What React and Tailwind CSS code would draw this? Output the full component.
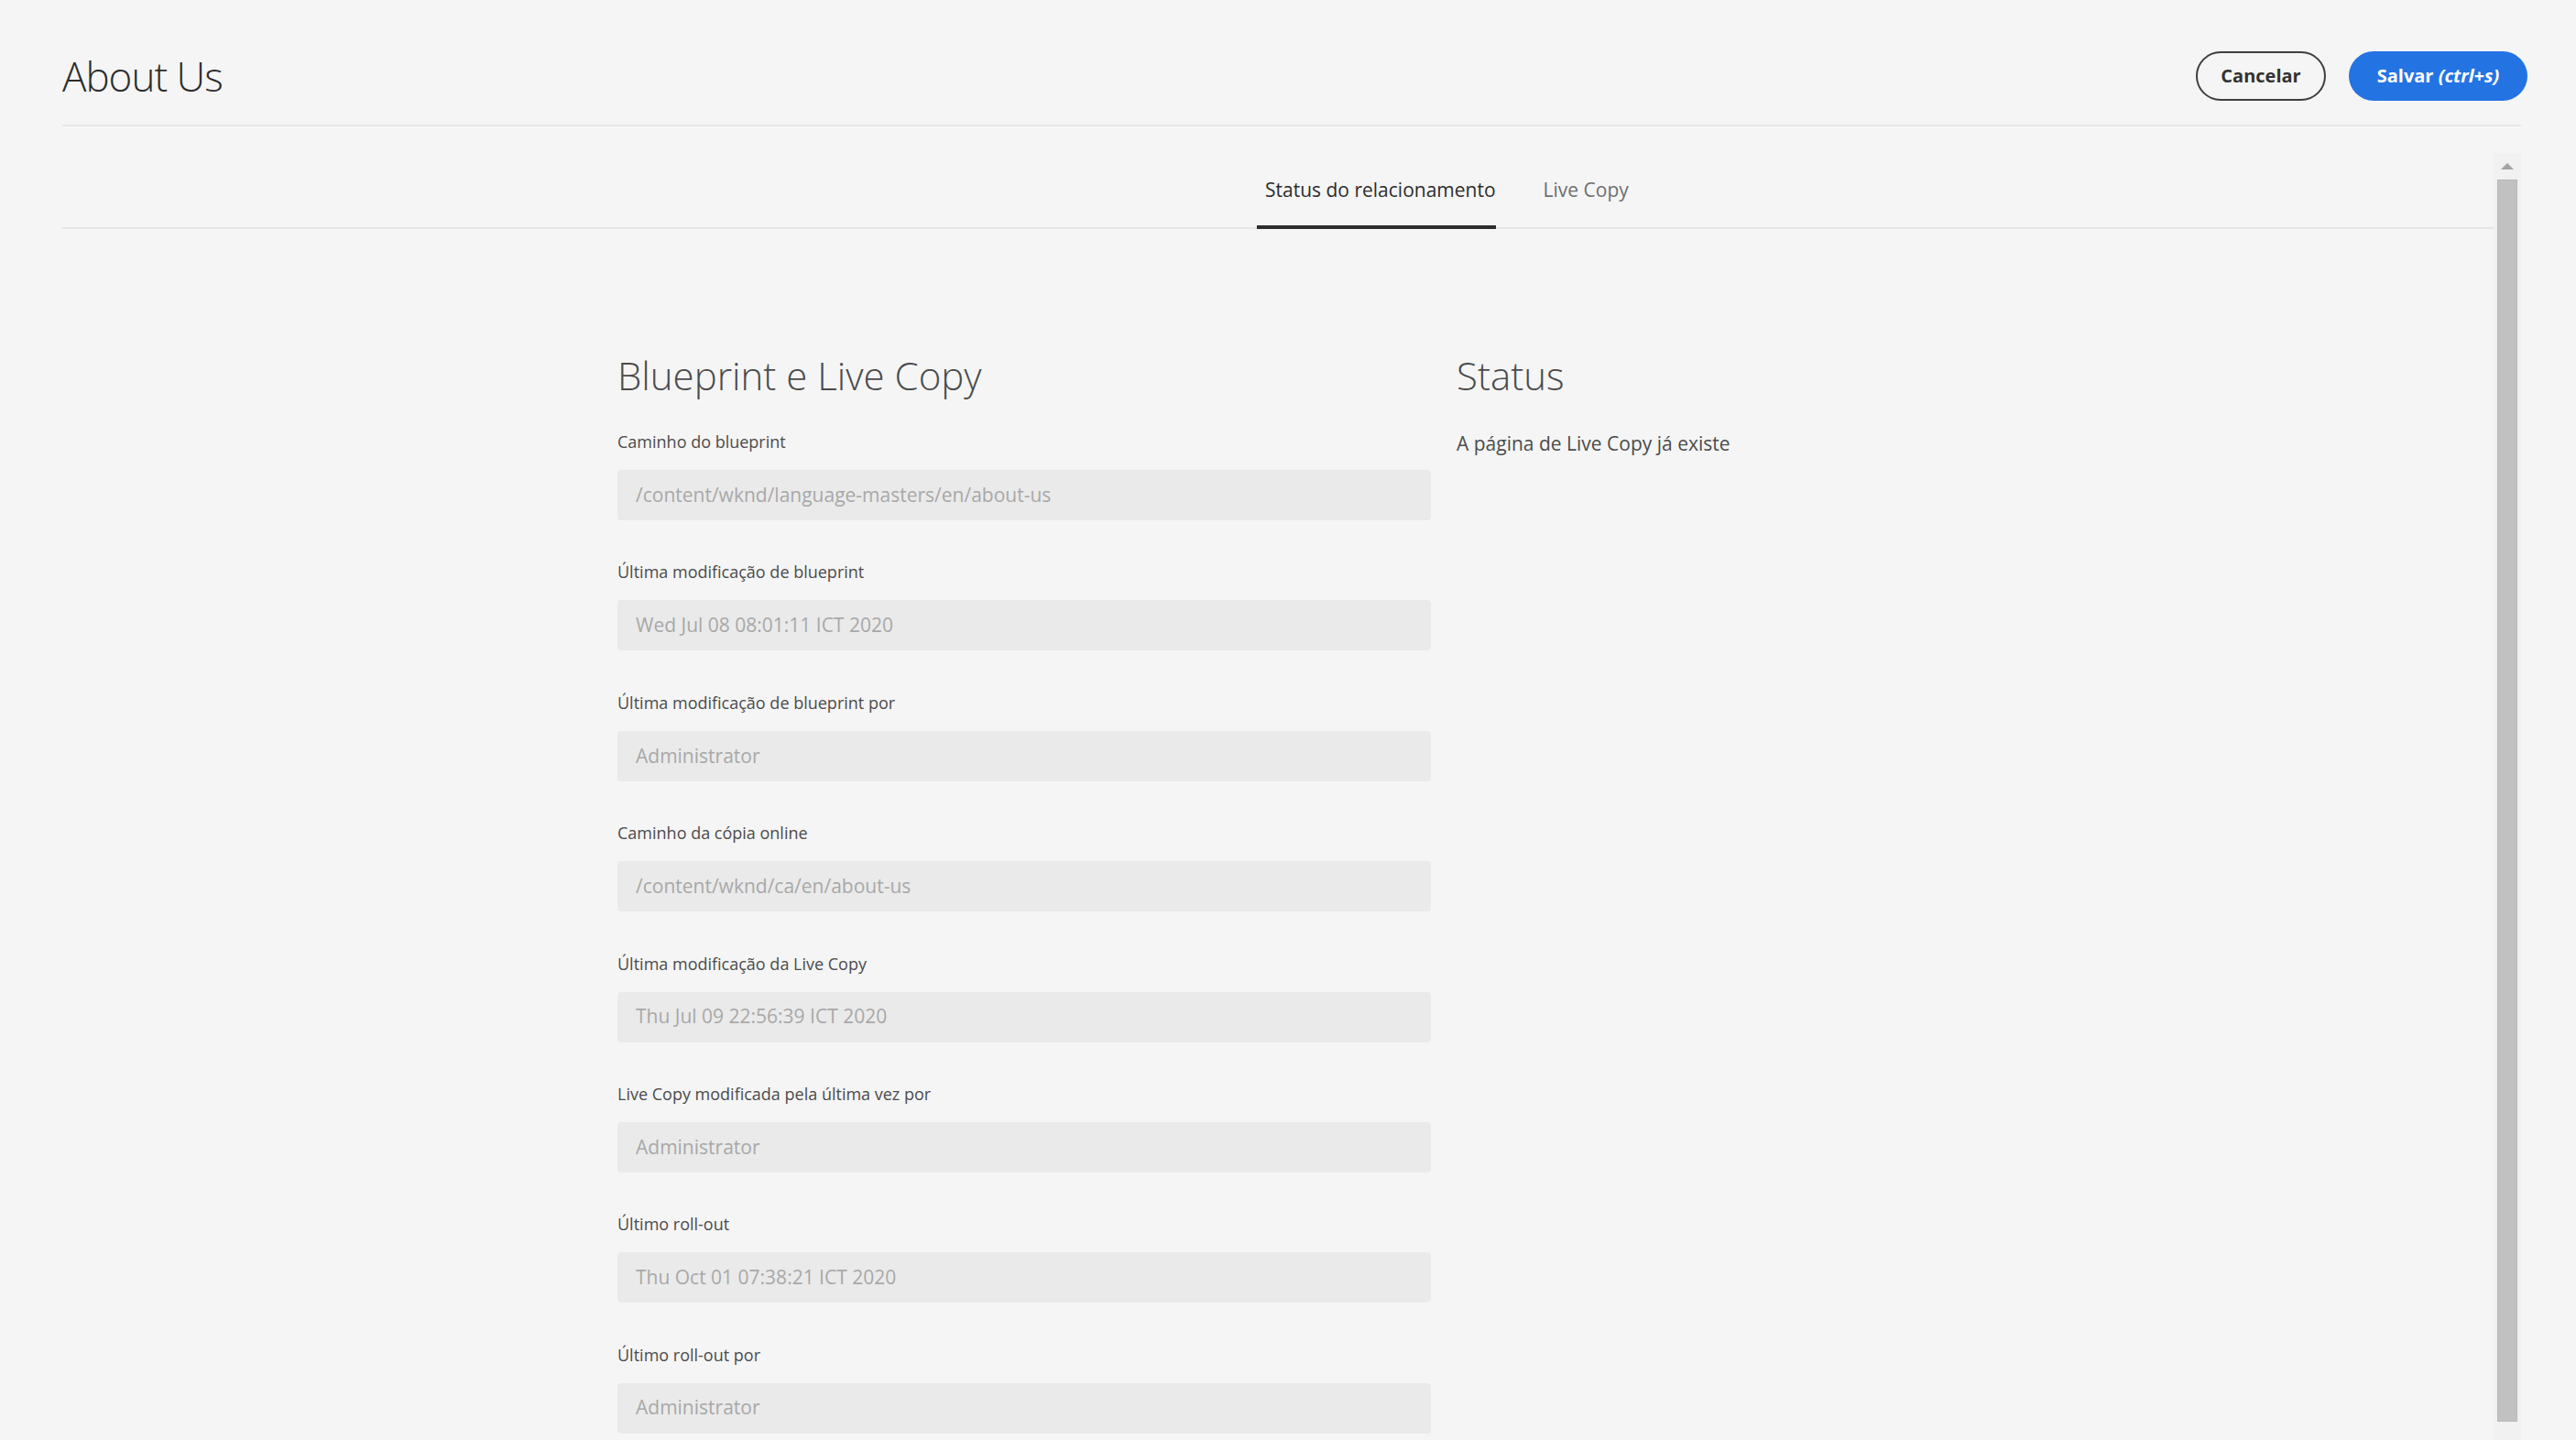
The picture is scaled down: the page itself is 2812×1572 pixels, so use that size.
const fields = [
  { label: 'Caminho do blueprint', value: '/content/wknd/language-masters/en/about-us' },
  { label: 'Última modificação de blueprint', value: 'Wed Jul 08 08:01:11 ICT 2020' },
  { label: 'Última modificação de blueprint por', value: 'Administrator' },
  { label: 'Caminho da cópia online', value: '/content/wknd/ca/en/about-us' },
  { label: 'Última modificação da Live Copy', value: 'Thu Jul 09 22:56:39 ICT 2020' },
  { label: 'Live Copy modificada pela última vez por', value: 'Administrator' },
  { label: 'Último roll-out', value: 'Thu Oct 01 07:38:21 ICT 2020' },
  { label: 'Último roll-out por', value: 'Administrator' },
];

export default function App() {
  return (
    <div className="h-[1572px] w-[2812px] overflow-hidden bg-[#f5f5f5] font-['Open_Sans',sans-serif] text-[#323232]">
      <header className="pl-[68px] pr-[53px] pt-[56px]">
        <div className="flex h-[54px] items-center justify-between">
          <h1 className="text-[44px] font-light leading-none text-[#2c2c2c] tracking-[-1px]">About Us</h1>
          <div className="flex items-center gap-[25px]">
            <button className="h-[54px] w-[142px] rounded-full border-2 border-[#3e3e3e] text-[20px] font-bold text-[#323232]">
              Cancelar
            </button>
            <button className="h-[54px] w-[195px] rounded-full bg-[#2473e3] text-[20px] font-bold text-white">
              Salvar <span className="italic">(ctrl+s)</span>
            </button>
          </div>
        </div>
      </header>
      <div className="ml-[68px] mr-[60px] mt-[26px] h-[2px] bg-[#e8e8e8]" />

      <div className="ml-[68px] mr-[60px] mt-[29px] flex h-[1405px]">
        <main className="flex-1 overflow-hidden">
          <nav className="flex h-[83px] border-b-2 border-[#e6e6e6] pl-[1304px]">
            <Tab active label="Status do relacionamento" />
            <Tab label="Live Copy" />
          </nav>

          <div className="mx-auto mt-[136px] flex w-[1442px] gap-[28px]">
            <section className="w-[888px]">
              <h2 className="text-[42px] font-light leading-[48px] text-[#4b4b4b]">
                Blueprint e Live Copy
              </h2>
              <div className="mt-[35px] flex flex-col gap-[43.4px]">
                {fields.map((f) => (
                  <Field key={f.label} label={f.label} value={f.value} />
                ))}
              </div>
            </section>
            <section className="w-[526px]">
              <h2 className="text-[42px] font-light leading-[48px] text-[#4b4b4b]">Status</h2>
              <p className="mt-[35px] text-[21px] leading-[30px] text-[#4b4b4b]">
                A página de Live Copy já existe
              </p>
            </section>
          </div>
        </main>

        <aside className="flex w-[30px] flex-col items-center bg-[#f1f1f1]">
          <div className="flex h-[29px] w-full items-center justify-center">
            <div className="h-0 w-0 border-x-[7px] border-b-[7px] border-x-transparent border-b-[#a3a3a3]" />
          </div>
          <div className="h-[1356px] w-[22px] border border-[#b8b8b8] bg-[#c1c1c1]" />
        </aside>
      </div>
    </div>
  );
}

function Tab({ label, active }) {
  return (
    <div
      className={
        active
          ? 'relative mr-[43px] flex items-center pl-[9px] text-[21px] text-[#2c2c2c]'
          : 'relative flex items-center pl-[9px] text-[21px] text-[#6e6e6e]'
      }
    >
      {label}
      {active ? <div className="absolute -bottom-[2px] left-0 right-0 h-[4px] bg-[#2c2c2c]" /> : null}
    </div>
  );
}

function Field({ label, value }) {
  return (
    <div>
      <label className="block text-[18px] leading-[27px] text-[#4b4b4b]">{label}</label>
      <div className="mt-[17px] flex h-[55px] items-center rounded-[4px] bg-[#eaeaea] px-[20px] text-[21px] text-[#a8a8a8]">
        {value}
      </div>
    </div>
  );
}
